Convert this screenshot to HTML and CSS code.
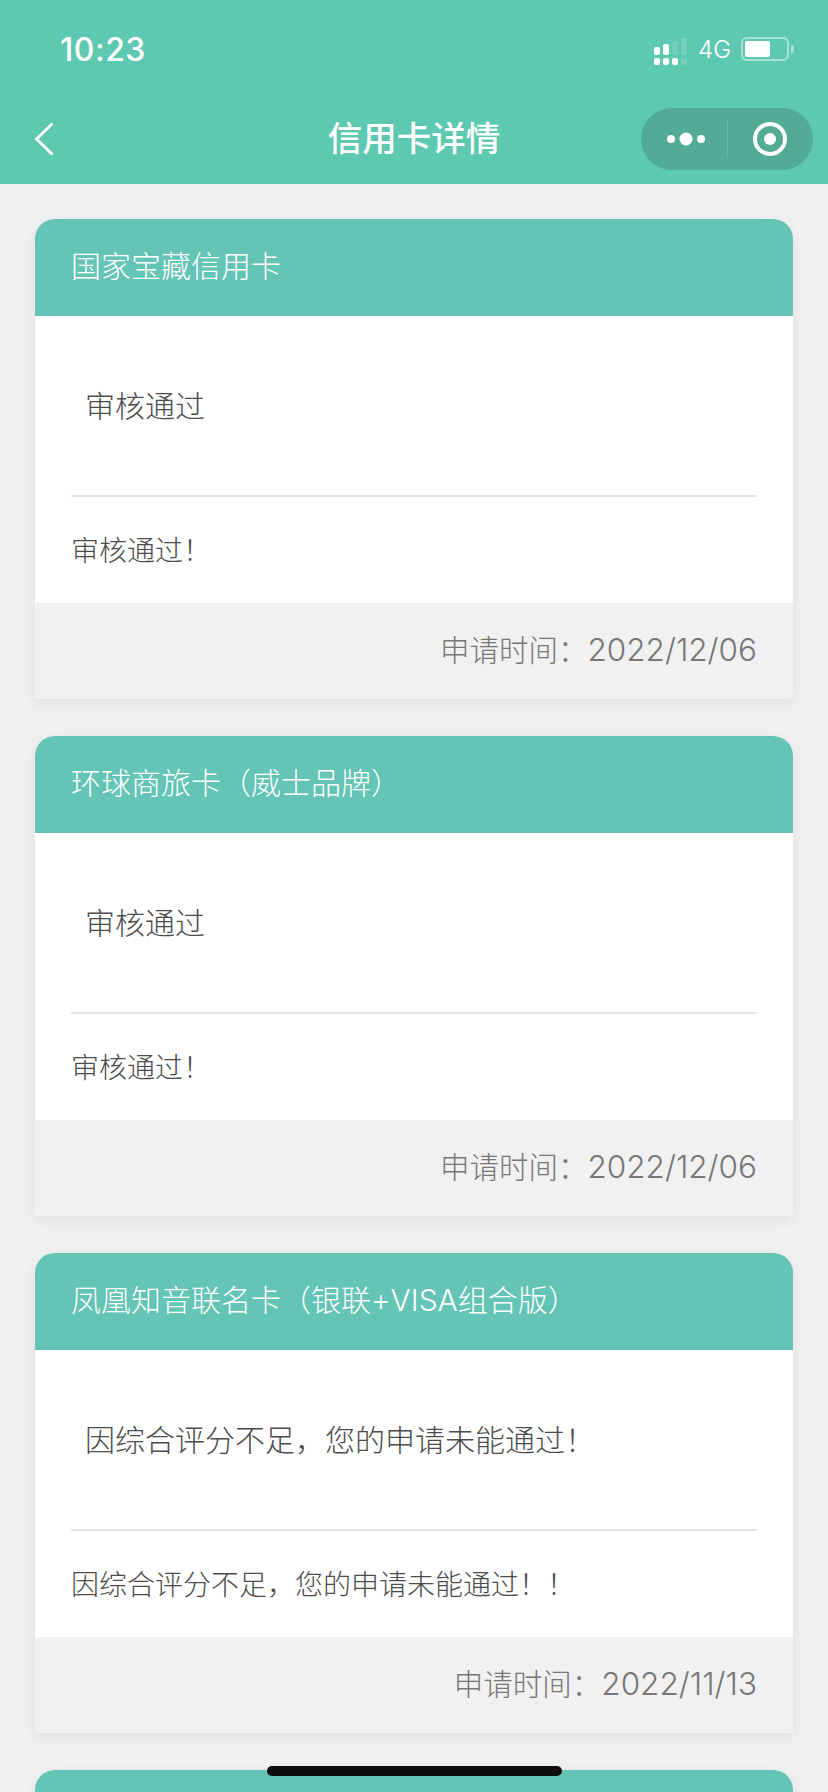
FILE: index.html
```html
<!DOCTYPE html>
<html lang="zh-CN">
<head>
    <meta charset="UTF-8">
    <meta name="viewport" content="width=device-width, initial-scale=1.0">
    <title>信用卡详情</title>
    <link rel="stylesheet" href="styles.css">
</head>
<body>
    <div class="top">
        <div class="status-bar">
            <span class="time">10:23</span>
            <div class="status-right">
                <svg class="signal" width="34" height="28" viewBox="0 0 34 28">
                    <g fill="#fff">
                        <rect x="0" y="9" width="6" height="8" rx="2"/>
                        <rect x="9" y="6" width="6" height="11" rx="2"/>
                        <rect x="0" y="20" width="6" height="7" rx="2"/>
                        <rect x="9" y="20" width="6" height="7" rx="2"/>
                        <rect x="18" y="20" width="6" height="7" rx="2"/>
                    </g>
                    <g fill="#fff" opacity="0.15">
                        <rect x="18" y="3" width="6" height="14" rx="2"/>
                        <rect x="27" y="0" width="6" height="17" rx="2"/>
                        <rect x="27" y="20" width="6" height="7" rx="2"/>
                    </g>
                </svg>
                <span class="network">4G</span>
                <div class="battery"><div class="battery-level"></div></div>
                <div class="battery-tip"></div>
            </div>
        </div>
        <div class="nav-bar">
            <svg class="back" width="20" height="34" viewBox="0 0 20 34">
                <path d="M18.5 1.5 L2.5 17 L18.5 32.5" fill="none" stroke="#fff" stroke-width="2.8"/>
            </svg>
            <div class="nav-title">信用卡详情</div>
            <div class="capsule">
                <div class="capsule-part">
                    <svg class="capsule-dots" width="38" height="14" viewBox="0 0 38 14">
                        <circle cx="4" cy="7" r="4" fill="#fff"/>
                        <circle cx="19" cy="7" r="6.5" fill="#fff"/>
                        <circle cx="34" cy="7" r="4" fill="#fff"/>
                    </svg>
                </div>
                <div class="capsule-line"></div>
                <div class="capsule-part">
                    <svg width="34" height="34" viewBox="0 0 34 34">
                        <circle cx="17" cy="17" r="15" fill="none" stroke="#fff" stroke-width="4"/>
                        <circle cx="17" cy="17" r="6" fill="#fff"/>
                    </svg>
                </div>
            </div>
        </div>
    </div>

    <div class="list">
        <div class="card">
            <div class="card-head">国家宝藏信用卡</div>
            <div class="card-body">
                <div class="result">审核通过</div>
                <div class="remark">审核通过！</div>
            </div>
            <div class="card-foot">申请时间：<span class="date">2022/12/06</span></div>
        </div>
        <div class="card">
            <div class="card-head">环球商旅卡（威士品牌）</div>
            <div class="card-body">
                <div class="result">审核通过</div>
                <div class="remark">审核通过！</div>
            </div>
            <div class="card-foot">申请时间：<span class="date">2022/12/06</span></div>
        </div>
        <div class="card">
            <div class="card-head">凤凰知音联名卡（银联+VISA组合版）</div>
            <div class="card-body">
                <div class="result">因综合评分不足，您的申请未能通过！</div>
                <div class="remark">因综合评分不足，您的申请未能通过！！</div>
            </div>
            <div class="card-foot">申请时间：<span class="date">2022/11/13</span></div>
        </div>
        <div class="card">
            <div class="card-head"></div>
        </div>
    </div>

    <div class="home-bar"></div>
</body>
</html>
```

FILE: styles.css
```css
html, body {
    height: 100%;
}
body {
    margin: 0;
    height: 1792px;
    overflow: hidden;
    background: #f0f0f0;
    font-family: Inter, "Noto Sans CJK SC", sans-serif;
    font-weight: 300;
    position: relative;
}
.top {
    height: 184px;
    background: #5dc9b0;
    color: #fff;
}
.status-bar {
    height: 88px;
    box-sizing: border-box;
    display: flex;
    justify-content: space-between;
    align-items: center;
    padding: 10px 34px 0 60px;
}
.time {
    font-size: 32px;
    font-weight: 500;
    letter-spacing: 0.5px;
}
.status-right {
    display: flex;
    align-items: center;
}
.signal {
    margin-top: 6px;
    margin-right: 10px;
}
.network {
    font-size: 24px;
    font-weight: 300;
    margin-right: 10px;
}
.battery {
    width: 48px;
    height: 24px;
    box-sizing: border-box;
    border: 2px solid rgba(255, 255, 255, 0.45);
    border-radius: 6px;
    padding: 2px;
}
.battery-level {
    width: 25px;
    height: 100%;
    background: #fff;
    border-radius: 2px;
}
.battery-tip {
    width: 3px;
    height: 8px;
    margin-left: 2px;
    background: rgba(255, 255, 255, 0.45);
    border-radius: 0 2px 2px 0;
}
.nav-bar {
    height: 96px;
    display: flex;
    align-items: center;
    justify-content: space-between;
    padding: 0 15px 0 34px;
    position: relative;
}
.nav-title {
    position: absolute;
    left: 0;
    right: 0;
    top: 28px;
    text-align: center;
    font-size: 34.5px;
    font-weight: 500;
    line-height: 46px;
}
.capsule {
    width: 172px;
    height: 62px;
    margin-top: 6px;
    background: #52ab95;
    border-radius: 31px;
    display: flex;
    align-items: center;
}
.capsule-part {
    flex: 1;
    display: flex;
    justify-content: center;
    align-items: center;
}
.capsule-dots {
    margin-left: 4px;
}
.capsule-line {
    width: 1px;
    height: 38px;
    background: rgba(255, 255, 255, 0.15);
}
.back {
    margin-top: 6px;
}
.list {
    padding: 35px 35px 0;
    display: flex;
    flex-direction: column;
    gap: 37px;
}
.card {
    border-radius: 20px 20px 0 0;
    box-shadow: 0 4px 14px rgba(0, 0, 0, 0.07);
}
.card-head {
    height: 97px;
    line-height: 94px;
    padding: 0 36px;
    background: #64c4b5;
    color: #fff;
    font-size: 30px;
    border-radius: 20px 20px 0 0;
}
.card-body {
    background: #fff;
    height: 287px;
    padding: 0 36px;
    color: #4c4c4c;
}
.result {
    height: 181px;
    box-sizing: border-box;
    padding-left: 14px;
    line-height: 180px;
    font-size: 30px;
    border-bottom: 2px solid #e4e4e4;
}
.remark {
    line-height: 108px;
    font-size: 28px;
}
.card-foot {
    height: 96px;
    line-height: 94px;
    padding: 0 36px;
    background: #f1f1f1;
    color: #777;
    font-size: 29.5px;
    text-align: right;
}
.date {
    font-size: 31.5px;
}
.home-bar {
    position: absolute;
    left: 267px;
    top: 1766px;
    width: 295px;
    height: 10px;
    background: #0d0d0d;
    border-radius: 5px;
}
```
